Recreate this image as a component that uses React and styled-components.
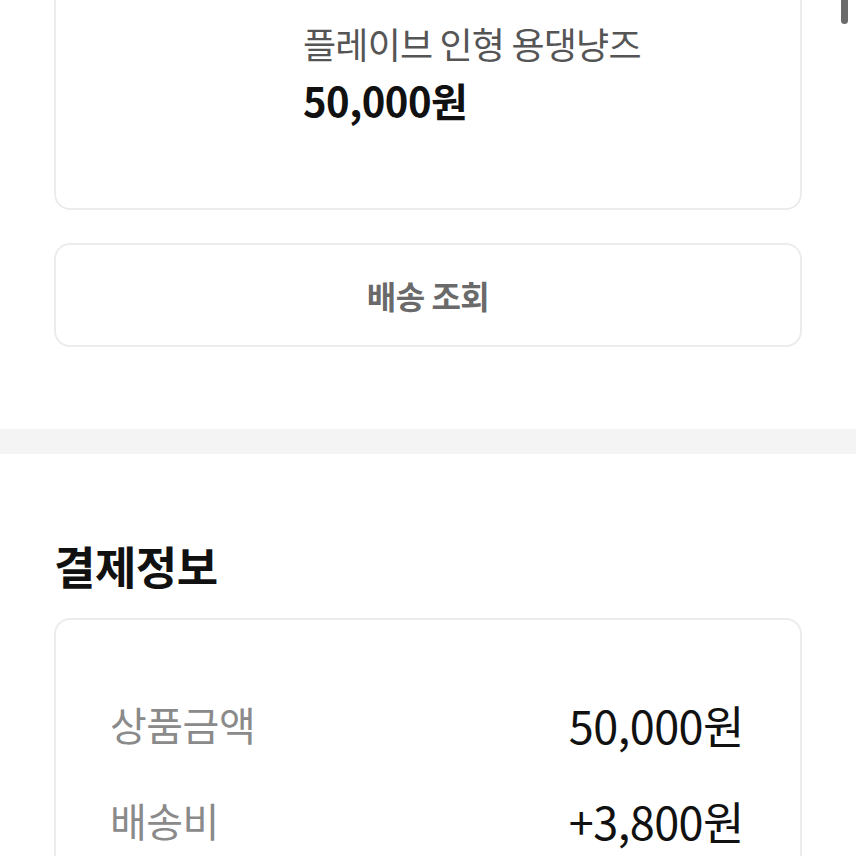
import React from "react";
import styled, { createGlobalStyle } from "styled-components";

const GlobalStyle = createGlobalStyle`
  html, body {
    margin: 0;
    padding: 0;
    background: #ffffff;
    overflow: hidden;
  }
  body {
    font-family: "Noto Sans CJK KR", "Noto Sans", sans-serif;
    color: #111111;
  }
`;

function App() {
  return (
    <Page>
      <GlobalStyle />
      <ScrollThumb />
      <Section>
        <ProductCard>
          <Thumb />
          <ProductInfo>
            <ProductName>플레이브 인형 용댕냥즈</ProductName>
            <ProductPrice>50,000원</ProductPrice>
          </ProductInfo>
        </ProductCard>
        <OutlineButton>배송 조회</OutlineButton>
      </Section>
      <Divider />
      <Section>
        <Heading>결제정보</Heading>
        <PayCard>
          <PayRow>
            <PayLabel>상품금액</PayLabel>
            <PayValue>50,000원</PayValue>
          </PayRow>
          <PayRow>
            <PayLabel>배송비</PayLabel>
            <PayValue>+3,800원</PayValue>
          </PayRow>
        </PayCard>
      </Section>
    </Page>
  );
}

const Page = styled.div`
  position: relative;
  width: 856px;
  height: 856px;
  overflow: hidden;
  background: #ffffff;
`;

const ScrollThumb = styled.div`
  position: absolute;
  top: -10px;
  right: 8px;
  width: 7px;
  height: 34px;
  border-radius: 4px;
  background: #6b6b6b;
`;

const Section = styled.div`
  display: flex;
  flex-direction: column;
  padding: 0 54px;
`;

const ProductCard = styled.div`
  display: flex;
  margin-top: -30px;
  height: 240px;
  box-sizing: border-box;
  border: 2px solid #ececec;
  border-radius: 16px;
`;

const Thumb = styled.div`
  width: 247px;
  flex-shrink: 0;
`;

const ProductInfo = styled.div`
  display: flex;
  flex-direction: column;
  padding-top: 46px;
`;

const ProductName = styled.div`
  font-size: 36px;
  line-height: 50px;
  color: #555555;
  letter-spacing: -0.8px;
`;

const ProductPrice = styled.div`
  margin-top: 8px;
  font-size: 40px;
  line-height: 48px;
  font-weight: 700;
  color: #111111;
  letter-spacing: -0.5px;
`;

const OutlineButton = styled.div`
  margin-top: 33px;
  height: 104px;
  box-sizing: border-box;
  border: 2px solid #ececec;
  border-radius: 16px;
  display: flex;
  align-items: center;
  justify-content: center;
  font-size: 32px;
  font-weight: 700;
  color: #6a6a6a;
  letter-spacing: -0.5px;
`;

const Divider = styled.div`
  margin-top: 82px;
  height: 25px;
  background: #f4f4f4;
`;

const Heading = styled.div`
  margin-top: 82px;
  font-size: 45px;
  line-height: 60px;
  font-weight: 700;
  color: #111111;
  letter-spacing: -0.5px;
`;

const PayCard = styled.div`
  margin-top: 22px;
  height: 400px;
  box-sizing: border-box;
  border: 2px solid #ececec;
  border-radius: 16px;
  padding: 74px 56px 0 54px;
  display: flex;
  flex-direction: column;
  gap: 36px;
`;

const PayRow = styled.div`
  display: flex;
  justify-content: space-between;
  align-items: center;
  height: 60px;
`;

const PayLabel = styled.div`
  font-size: 40px;
  color: #8a8a8a;
  letter-spacing: -0.5px;
`;

const PayValue = styled.div`
  font-size: 45px;
  color: #111111;
  letter-spacing: -0.5px;
`;

export default App;
